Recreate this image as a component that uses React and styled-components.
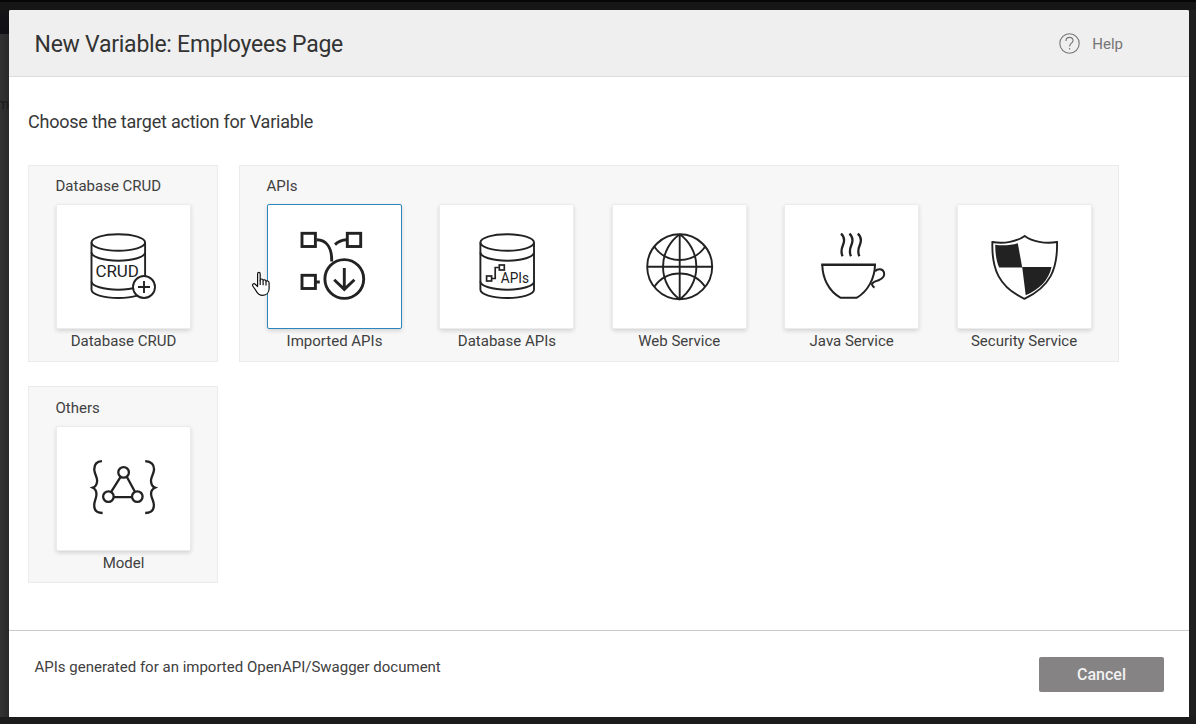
import React from "react";
import styled, { createGlobalStyle } from "styled-components";

const Global = createGlobalStyle`
  * { box-sizing: border-box; }
  html, body { margin: 0; height: 100%; overflow: hidden; }
  body { font-family: Roboto, "Liberation Sans", sans-serif; color: #333; }
`;

const Backdrop = styled.div`
  position: relative;
  width: 1196px;
  height: 724px;
  padding: 10px 7px 7px 9px;
  overflow: hidden;
  background:
    linear-gradient(#060606, #060606) 0 0 / 100% 2px no-repeat,
    linear-gradient(#161616, #161616) 0 0 / 100% 10px no-repeat,
    linear-gradient(#1c1c1c, #1c1c1c) 0 717px / 100% 7px no-repeat,
    linear-gradient(#151518, #0f0f14) 0 10px / 9px 24px no-repeat,
    linear-gradient(90deg, #323232, #292929) 0 34px / 9px 690px no-repeat,
    #1f1f1f;
`;

const BehindText = styled.span`
  position: absolute;
  left: -3px;
  top: 96px;
  font-size: 14px;
  line-height: 16px;
  color: #1b1b1b;
`;

const Dialog = styled.section`
  position: relative;
  display: flex;
  flex-direction: column;
  width: 1180px;
  height: 707px;
  background: #fff;
  border-radius: 2px 2px 0 0;
  overflow: hidden;
`;

const Header = styled.header`
  display: flex;
  align-items: center;
  justify-content: space-between;
  height: 67px;
  padding: 0 66px 0 25.5px;
  background: #efefef;
  border-bottom: 1px solid #dcdcdc;
`;

const Title = styled.h1`
  margin: 0;
  padding-top: 4px;
  font-size: 23px;
  font-weight: 400;
  line-height: 28px;
  letter-spacing: -0.25px;
  color: #333;
`;

const Help = styled.div`
  display: flex;
  align-items: center;
  gap: 12px;
  padding-top: 1px;
  font-size: 15px;
  line-height: 20px;
  color: #757575;
`;

const Body = styled.main`
  flex: 1;
  padding: 33px 19px 0;
`;

const Prompt = styled.h2`
  margin: 0 0 33.3px;
  font-size: 18px;
  font-weight: 400;
  line-height: 24px;
  height: 22px;
  letter-spacing: -0.22px;
  color: #383838;
`;

const Groups = styled.div`
  display: flex;
  flex-wrap: wrap;
  gap: 24.15px 21px;
`;

const Group = styled.section`
  height: 197px;
  width: ${(p) => p.$width}px;
  padding: 10.15px 26px 0 27px;
  background: #f7f7f7;
  border: 1px solid #ebebeb;
`;

const GroupTitle = styled.h3`
  margin: 0 0 8px -0.5px;
  font-size: 15px;
  font-weight: 400;
  line-height: 20px;
  color: #404040;
`;

const Tiles = styled.div`
  display: flex;
  gap: 37.4px;
`;

const Tile = styled.div`
  flex: none;
  width: 135px;
`;

const Card = styled.div`
  display: flex;
  align-items: center;
  justify-content: center;
  height: 125px;
  background: #fff;
  border: 1px solid ${(p) => (p.$active ? "#2a86bd" : "#ececec")};
  border-radius: 2px;
  box-shadow: 0 2px 4px rgba(0, 0, 0, 0.14);
`;

const Caption = styled.div`
  margin-top: 2px;
  font-size: 15px;
  line-height: 20px;
  text-align: center;
  color: #404040;
`;

const Footer = styled.footer`
  display: flex;
  justify-content: space-between;
  height: 87px;
  padding: 26px 25px 0 25.5px;
  border-top: 1px solid #c9cbcb;
`;

const Note = styled.p`
  margin: 0;
  font-size: 15px;
  line-height: 20px;
  color: #404040;
`;

const CancelButton = styled.button`
  width: 125px;
  height: 35px;
  padding: 0;
  border: 0;
  border-radius: 2px;
  background: #858384;
  color: #f2f2f2;
  font: 500 16px/35px Roboto, "Liberation Sans", sans-serif;
`;

const Pointer = styled.svg`
  position: absolute;
  left: 251px;
  top: 271px;
`;

const Glyph = styled.svg`
  flex: none;
  display: block;
  fill: none;
  stroke: #222;
  stroke-width: ${(p) => p.$weight || 1.9};
  text {
    fill: #222;
    stroke: none;
    font-family: Roboto, "Liberation Sans", sans-serif;
  }
`;

function Icon({ weight, children }) {
  return (
    <Glyph width="81" height="81" viewBox="0 0 81 81" $weight={weight}>
      {children}
    </Glyph>
  );
}

function Cylinder({ x }) {
  return (
    <g transform={`translate(${x} 0)`}>
      <ellipse cx="0" cy="16.5" rx="26.8" ry="8.3" />
      <path d="M-26.8 16.5V63.7A26.8 8.3 0 0 0 26.8 63.7V16.5" />
      <path d="M-26.8 26.4A26.8 8.3 0 0 0 26.8 26.4M-26.8 55.4A26.8 8.3 0 0 0 26.8 55.4" />
    </g>
  );
}

const CrudIcon = () => (
  <Icon>
    <Cylinder x={35.3} />
    <text x="12.4" y="50.6" fontSize="16.4" textLength="43.6" lengthAdjust="spacingAndGlyphs">CRUD</text>
    <circle cx="61" cy="61" r="11" fill="#fff" />
    <path d="M61 55v12M55 61h12" />
  </Icon>
);

const ImportedIcon = () => (
  <Icon weight={2.9}>
    <rect x="8" y="7.3" width="13.4" height="13.2" />
    <rect x="53.3" y="7.3" width="13.4" height="13.2" />
    <rect x="8" y="49.3" width="13.4" height="13.2" />
    <path d="M22.7 13.7C32 13.9 38 21 37.7 35.5M41 18.6C44.4 15.4 48 13.9 52.5 13.8M22 56h3.8" />
    <circle cx="50.3" cy="53" r="19.4" />
    <path d="M50.3 42v21.5M40.2 53.8L50.3 63.4L60.4 53.8" />
  </Icon>
);

const DatabaseApiIcon = () => (
  <Icon>
    <Cylinder x={41.2} />
    <g strokeWidth="1.7">
      <rect x="20.6" y="50" width="5" height="5" />
      <rect x="33.3" y="39" width="5" height="5" />
      <path d="M26 52.5h3.2v-11h3.6" />
    </g>
    <text x="34.8" y="56.7" fontSize="13.9" textLength="28.2" lengthAdjust="spacingAndGlyphs">APIs</text>
  </Icon>
);

const GlobeIcon = () => (
  <Icon>
    <circle cx="40.7" cy="40.7" r="32.5" />
    <path d="M40.7 8.2v65M8.2 40.7h65" />
    <path d="M40.7 8.2A40 40 0 0 0 40.7 73.2A40 40 0 0 0 40.7 8.2" />
    <path d="M15.3 20.7A31 31 0 0 0 66.1 20.7M15.3 60.7A31 31 0 0 1 66.1 60.7" />
  </Icon>
);

const CupIcon = () => (
  <Icon weight={2}>
    <path d="M10.2 38.7H65" strokeWidth="2.4" />
    <path d="M11.3 38.7C11.5 52 17.5 65 29.7 71.8H45.5C57 65.5 63.8 52 64 38.7" />
    <path d="M64 45.2C66.5 42.6 71.6 42.4 73 46.3C74 50.6 71 53 67.7 54.2C64.5 55.4 61.8 55.6 60.8 58.3C61.3 59.8 62.1 60.8 63.5 61.6" />
    <path d="M30 7.6C33.6 10.8 34 14.2 32 19C30.2 23.2 29.8 26.6 31.6 30.2M38.4 7.6C42 10.8 42.4 14.2 40.4 19C38.6 23.2 38.2 26.6 40 30.2M46.8 7.6C50.4 10.8 50.8 14.2 48.8 19C47 23.2 46.6 26.6 48.4 30.2" strokeWidth="2.3" />
  </Icon>
);

const ShieldIcon = () => (
  <Icon weight={1.9}>
    <path d="M40.7 9.9C33 15.6 20 18 8.4 16C7.5 43 15 61 40.4 72.8C66 61 73.8 43 73 16C61 18 48.5 15.6 40.7 9.9Z" />
    <path d="M11.2 18.8C19 20 27 19.2 33.8 17.2L38.2 41.6H15.2C12.2 35 11.2 27 11.2 18.8ZM38.2 41.1H67.5C65 54 55 64 41.7 69.2Z" fill="#222" stroke="none" />
  </Icon>
);

const ModelIcon = () => (
  <Icon weight={2.3}>
    <path d="M18.9 13.2C13 13.6 11 16.4 11.3 22C11.8 27 14.5 29 14.1 33.5C13.8 37 12.4 38.8 9.8 39.7C12.4 40.8 13.6 43 13.4 47C13.2 51 11.2 53 11.2 57.5C11.2 62.5 13.6 65 19.6 65" />
    <path d="M62.2 13.2C68.2 13.6 71.4 16.4 71 22C70.4 27 67.6 29 68 33.5C68.4 37 69.4 38.8 72 39.7C69.4 40.8 67.6 43 68.2 47C68.6 51 71 53 70.9 57.5C70.7 62.5 68.2 65 62.2 65" />
    <path d="M37.6 28.8L28 44.2M43.8 28.8L52.2 44.2M30.5 49.2H49.5" />
    <circle cx="40.6" cy="24.4" r="5.3" />
    <circle cx="25.4" cy="48.6" r="5.3" />
    <circle cx="54.3" cy="48.6" r="5.3" />
  </Icon>
);

const groups = [
  { title: "Database CRUD", width: 190, items: [{ label: "Database CRUD", Art: CrudIcon }] },
  {
    title: "APIs",
    width: 880,
    items: [
      { label: "Imported APIs", Art: ImportedIcon, active: true },
      { label: "Database APIs", Art: DatabaseApiIcon },
      { label: "Web Service", Art: GlobeIcon },
      { label: "Java Service", Art: CupIcon },
      { label: "Security Service", Art: ShieldIcon },
    ],
  },
  { title: "Others", width: 190, items: [{ label: "Model", Art: ModelIcon }] },
];

export default function App() {
  return (
    <Backdrop>
      <Global />
      <BehindText>m</BehindText>
      <Dialog>
        <Header>
          <Title>New Variable: Employees Page</Title>
          <Help>
            <svg width="21" height="21" viewBox="0 0 21 21" fill="none" stroke="#757575" strokeWidth="1.1">
              <circle cx="10.5" cy="10.5" r="9.7" />
              <path d="M7 8C7 5.6 8.4 4.4 10.5 4.4S14 5.7 14 7.7C14 10.2 10.6 10.2 10.6 13.4M10.6 15v1.5" />
            </svg>
            Help
          </Help>
        </Header>
        <Body>
          <Prompt>Choose the target action for Variable</Prompt>
          <Groups>
            {groups.map((group) => (
              <Group key={group.title} $width={group.width}>
                <GroupTitle>{group.title}</GroupTitle>
                <Tiles>
                  {group.items.map(({ label, Art, active }) => (
                    <Tile key={label}>
                      <Card $active={active}>
                        <Art />
                      </Card>
                      <Caption>{label}</Caption>
                    </Tile>
                  ))}
                </Tiles>
              </Group>
            ))}
          </Groups>
        </Body>
        <Footer>
          <Note>APIs generated for an imported OpenAPI/Swagger document</Note>
          <CancelButton>Cancel</CancelButton>
        </Footer>
      </Dialog>
      <Pointer width="20" height="26" viewBox="0 0 20 26" fill="#fff" stroke="#111" strokeWidth="1.2" strokeLinejoin="round">
        <path d="M6.6 15.5V2.9C6.6 .9 9.2 .9 9.2 2.9V9.2C9.6 7.4 12 7.7 12.1 9.4C12.8 8.3 14.8 8.6 15 10.3C15.9 9.5 18 9.9 18.1 11.9V17.5C18.1 21.5 15.5 24.3 11.8 24.3C8 24.3 6.4 22.5 5 19.7L1.8 15C.8 13.3 2.8 12 4.2 13.2Z" />
        <path d="M9.2 9v5M12.1 9.7v4.5M15 10.5v4" fill="none" />
      </Pointer>
    </Backdrop>
  );
}
